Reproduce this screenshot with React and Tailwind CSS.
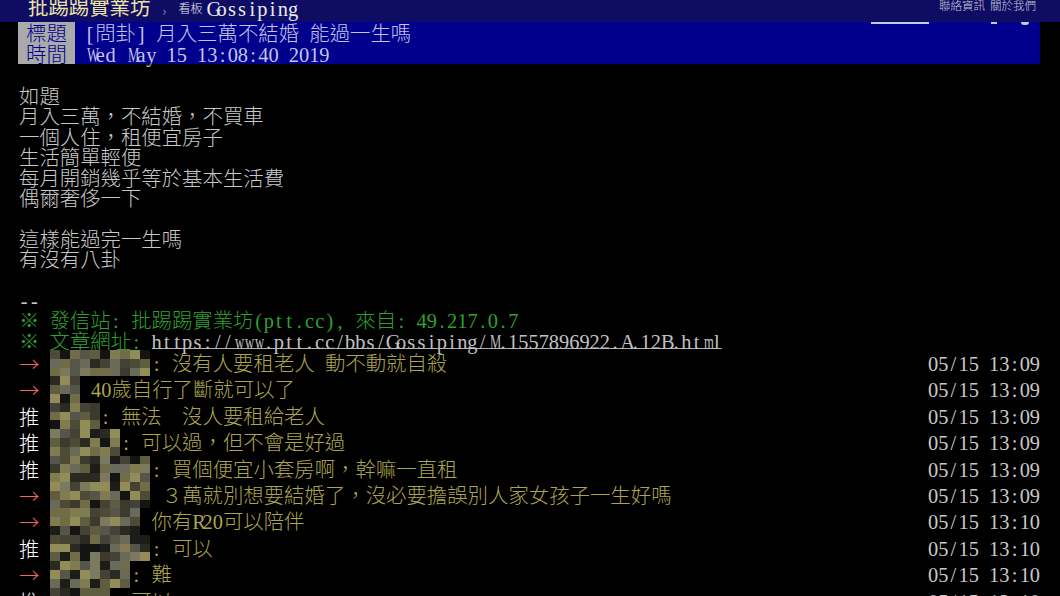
import React from "react";

const WIDE = "WMmw";

function T({ children }) {
  const parts = String(children).split(/([\x00-\x7F]+)/);
  return parts.map((p, i) =>
    i % 2 ? (
      <React.Fragment key={i}>
        {Array.from(p).map((ch, j) => (
          <span
            key={j}
            className={
              WIDE.includes(ch)
                ? "inline-block w-[10.2px] text-center font-['Liberation_Serif'] scale-x-[0.62]"
                : "inline-block w-[10.2px] text-center font-['Liberation_Serif']"
            }
          >
            {ch === " " ? "\u00a0" : ch}
          </span>
        ))}
      </React.Fragment>
    ) : (
      <React.Fragment key={i}>{p}</React.Fragment>
    )
  );
}

const PALETTE = [
  "#2a2a22", "#3b3a2c", "#4d4b36", "#5f5d40", "#6f6c47", "#807c4f",
  "#918c58", "#1c1c18", "#55554a", "#6a6a5a", "#7c7a5e", "#444236", "#141412",
];

function Mosaic({ w, seed, gap }) {
  let s = seed * 9301 + 49297;
  const rnd = () => {
    s = (s * 9301 + 49297) % 233280;
    return s / 233280;
  };
  const cols = Math.ceil(w / 10);
  const cells = [];
  for (let r = 0; r < 3; r++) {
    for (let c = 0; c < cols; c++) {
      cells.push(PALETTE[Math.floor(rnd() * PALETTE.length)]);
    }
  }
  return (
    <div className="h-[26.4px] overflow-hidden shrink-0 flex flex-wrap" style={{ width: w, marginRight: gap || 0 }}>
      <div className="flex flex-wrap" style={{ width: cols * 10 }}>
        {cells.map((c, i) => (
          <div key={i} className="w-[10px] h-[8.8px]" style={{ background: c }} />
        ))}
      </div>
    </div>
  );
}

const U = 10.2;

const pushes = [
  { tag: "→", m: 10, text: ": 沒有人要租老人 動不動就自殺", time: "05/15 13:09" },
  { tag: "→", m: 3.4, g: 6.8, text: "40歲自行了斷就可以了", time: "05/15 13:09" },
  { tag: "推", m: 5, text: ": 無法　沒人要租給老人", time: "05/15 13:09" },
  { tag: "推", m: 7, text: ": 可以過，但不會是好過", time: "05/15 13:09" },
  { tag: "推", m: 10, text: ": 買個便宜小套房啊，幹嘛一直租", time: "05/15 13:09" },
  { tag: "→", m: 10, text: " ３萬就別想要結婚了，沒必要擔誤別人家女孩子一生好嗎", time: "05/15 13:09" },
  { tag: "→", m: 9, text: " 你有R20可以陪伴", time: "05/15 13:10" },
  { tag: "推", m: 10, text: ": 可以", time: "05/15 13:10" },
  { tag: "→", m: 8, text: ": 難", time: "05/15 13:10" },
  { tag: "推", m: 6, text: ": 可以", time: "05/15 13:10" },
];

const bodyLines = [
  "如題",
  "月入三萬，不結婚，不買車",
  "一個人住，租便宜房子",
  "生活簡單輕便",
  "每月開銷幾乎等於基本生活費",
  "偶爾奢侈一下",
  "",
  "這樣能過完一生嗎",
  "有沒有八卦",
  "",
  "--",
];

export default function App() {
  return (
    <div className="w-[1060px] h-[596px] bg-black overflow-hidden relative font-['Noto_Sans_CJK_TC',sans-serif] font-light text-[20.4px]">
      {/* top bar */}
      <div className="h-[22px] bg-[#0f0d63] flex items-start overflow-hidden pl-[28px] pr-[24px]">
        <span className="text-[#ece3a2] leading-[20px] -mt-[4px] text-[20.4px] font-normal whitespace-nowrap">批踢踢實業坊</span>
        <span className="text-[#a8a8c8] text-[14px] leading-[16px] ml-[12px] mt-[2px]">›</span>
        <span className="text-[#e8e8f0] text-[12px] leading-[14px] ml-[12px] mt-[1px]">看板</span>
        <span className="text-[#e8e8f0] leading-[20px] -mt-[3px] ml-[4px] whitespace-pre"><T>Gossiping</T></span>
        <div className="ml-auto flex gap-[5px] text-[11.5px] leading-[12px] text-[#c8c8d8] -mt-[1px]">
          <span>聯絡資訊</span>
          <span>關於我們</span>
        </div>
      </div>

      {/* header */}
      <div className="ml-[18px] w-[1022px] bg-[#00008c] relative">
        <div className="absolute left-[853px] top-0 w-[58px] h-[2px] bg-[#c8c8e0]" />
        <div className="absolute left-[973px] top-0 w-[6px] h-[2px] bg-[#c8c8e0]" />
        <div className="absolute left-[1003px] top-0 w-[8px] h-[3px] bg-[#c8c8e0] rounded-b-full" />
        {[
          ["標題", "[問卦] 月入三萬不結婚 能過一生嗎"],
          ["時間", "Wed May 15 13:08:40 2019"],
        ].map(([k, v]) => (
          <div key={k} className="flex h-[21px] leading-[21px] whitespace-pre">
            <div className="w-[57px] bg-[#aaaaaa] text-[#000090] text-center">{k}</div>
            <div className="pl-[10px] text-[#c4c4e8]"><T>{v}</T></div>
          </div>
        ))}
      </div>

      {/* body */}
      <div className="mt-[21px] pl-[19px] pr-[20px] text-[#c8c8c8] whitespace-pre">
        {bodyLines.map((l, i) => (
          <div key={i} className="h-[20.4px] leading-[20.4px]">
            <T>{l}</T>
          </div>
        ))}
        <div className="h-[20.4px] leading-[20.4px] text-[#2fa02f]">
          <T>{"※ 發信站: 批踢踢實業坊(ptt.cc), 來自: 49.217.0.7"}</T>
        </div>
        <div className="h-[20.4px] leading-[20.4px] text-[#2fa02f] flex items-start">
          <span><T>{"※ 文章網址: "}</T></span>
          <span className="text-[#c0c0c0] inline-block h-[19.5px] border-b border-[#b0b0b0] leading-[20.4px]">
            <T>https://www.ptt.cc/bbs/Gossiping/M.1557896922.A.12B.html</T>
          </span>
        </div>

        {pushes.map((p, i) => (
          <div key={i} className="flex items-center h-[26.4px] leading-[26.4px]">
            <span
              className={
                p.tag === "推"
                  ? "w-[20.4px] mr-[10.2px] text-white shrink-0"
                  : "w-[20.4px] mr-[10.2px] text-[#f06464] shrink-0"
              }
            >
              {p.tag}
            </span>
            <Mosaic w={p.m * U} gap={p.g} seed={i * 7 + 3} />
            <span className="text-[#ada54e]">
              <T>{p.text}</T>
            </span>
            <span className="ml-auto text-[#c8c8c8]">
              <T>{p.time}</T>
            </span>
          </div>
        ))}
      </div>
    </div>
  );
}
